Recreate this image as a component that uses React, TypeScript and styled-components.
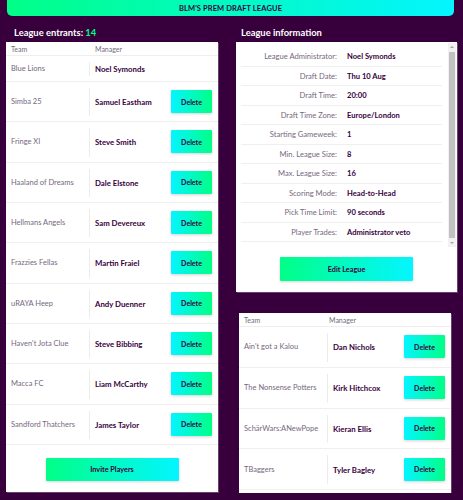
import styled, { createGlobalStyle } from "styled-components";

const GlobalStyle = createGlobalStyle`
  body {
    margin: 0;
    background: #37003c;
    font-family: Lato, "Noto Sans", Arial, sans-serif;
  }
`;

const green = "#00ff87";
const cyan = "#04f5ff";
const purple = "#37003c";

const Banner = styled.div`
  margin: 0 9px 0 7px;
  height: 16px;
  border-radius: 0 0 5px 5px;
  background: linear-gradient(to right, ${green}, ${cyan});
  display: flex;
  align-items: center;
  justify-content: center;
  color: ${purple};
  font-size: 7.5px;
  font-weight: 700;
  letter-spacing: 0.1px;
`;

const Columns = styled.div`
  display: grid;
  grid-template-columns: 212px 221px;
  column-gap: 18px;
  padding: 0 6px;
`;

const Column = styled.div`
  display: flex;
  flex-direction: column;
`;

const Title = styled.h2<{ $inset: number }>`
  margin: 10px 0 2px;
  padding-left: ${(p) => p.$inset}px;
  height: 14px;
  line-height: 14px;
  color: #fff;
  font-size: 9.4px;
  font-weight: 700;
  span {
    color: ${green};
  }
`;

const Panel = styled.div<{ $mt?: number; $ml?: number; $mr?: number }>`
  background: #fff;
  margin: ${(p) => p.$mt ?? 0}px ${(p) => p.$mr ?? 0}px 0 ${(p) => p.$ml ?? 0}px;
  box-shadow: 1px 1px 0 rgba(255, 255, 255, 0.25);
  display: flex;
  flex-direction: column;
`;

const HeadRow = styled.div<{ $team: number }>`
  display: grid;
  grid-template-columns: ${(p) => p.$team}px 1fr;
  height: 14px;
  align-items: center;
  border-bottom: 1px solid #eeeeee;
  padding-left: 5px;
  font-size: 7px;
  color: #756d7d;
  box-sizing: border-box;
  div + div {
    padding-left: 6px;
  }
`;

const Row = styled.div<{ $h: number; $team: number }>`
  display: grid;
  grid-template-columns: ${(p) => p.$team}px 1fr auto;
  height: ${(p) => p.$h}px;
  align-items: center;
  border-bottom: 1px solid #efefef;
  padding: 0 6px 0 5px;
  box-sizing: border-box;
`;

const TeamCell = styled.div`
  font-size: 7.5px;
  color: #76687e;
  white-space: nowrap;
`;

const ManagerCell = styled.div`
  align-self: stretch;
  margin: 6px 0 5px;
  border-left: 1px solid #ececec;
  padding-left: 5px;
  display: flex;
  align-items: center;
  font-size: 7.8px;
  font-weight: 700;
  color: ${purple};
  white-space: nowrap;
`;

const DeleteButton = styled.button`
  width: 41px;
  height: 23px;
  border: 0;
  border-radius: 1px;
  padding: 0;
  background: linear-gradient(to right, ${cyan}, ${green});
  box-shadow: 0 1px 3px rgba(0, 0, 0, 0.18);
  color: ${purple};
  font-family: inherit;
  font-size: 7px;
  font-weight: 700;
`;

const Footer = styled.div<{ $h: number; $pt: number }>`
  height: ${(p) => p.$h}px;
  padding-top: ${(p) => p.$pt}px;
  box-sizing: border-box;
  display: flex;
  justify-content: center;
`;

const WideButton = styled.button<{ $h: number }>`
  width: 133px;
  height: ${(p) => p.$h}px;
  border: 0;
  border-radius: 1px;
  background: linear-gradient(to right, ${green}, ${cyan});
  box-shadow: 0 1px 3px rgba(0, 0, 0, 0.15);
  color: ${purple};
  font-family: inherit;
  font-size: 7.3px;
  font-weight: 700;
`;

const InfoArea = styled.div`
  margin-top: 1px;
  height: 204px;
  display: flex;
`;

const InfoList = styled.div`
  flex: 1;
  overflow: hidden;
  padding: 4px 6px 0 5px;
`;

const ScrollTrack = styled.div`
  width: 8px;
  margin-right: 1px;
  background: #f1f1f1;
  display: flex;
  flex-direction: column;
  align-items: center;
`;

const ScrollArrow = styled.div<{ $down?: boolean }>`
  height: 8px;
  width: 8px;
  display: flex;
  align-items: center;
  justify-content: center;
  &::before {
    content: "";
    border-left: 2px solid transparent;
    border-right: 2px solid transparent;
    ${(p) => (p.$down ? "border-top" : "border-bottom")}: 2px solid #a3a3a3;
  }
`;

const ScrollThumb = styled.div`
  flex: 1;
  width: 6px;
  margin: 1px 0;
  background: #c1c1c1;
`;

const InfoRow = styled.div`
  display: grid;
  grid-template-columns: 96px 1fr;
  column-gap: 10px;
  height: 19.5px;
  align-items: center;
  border-bottom: 1px solid #efefef;
  box-sizing: border-box;
  font-size: 7.6px;
`;

const InfoLabel = styled.div`
  text-align: right;
  color: #76687e;
  white-space: nowrap;
`;

const InfoValue = styled.div`
  font-weight: 700;
  color: ${purple};
  white-space: nowrap;
`;

const entrants = [
  ["Simba 25", "Samuel Eastham"],
  ["Fringe XI", "Steve Smith"],
  ["Haaland of Dreams", "Dale Elstone"],
  ["Hellmans Angels", "Sam Devereux"],
  ["Frazzies Fellas", "Martin Fraiel"],
  ["uRAYA Heep", "Andy Duenner"],
  ["Haven't Jota Clue", "Steve Bibbing"],
  ["Macca FC", "Liam McCarthy"],
  ["Sandford Thatchers", "James Taylor"],
];

const pending = [
  ["Ain't got a Kalou", "Dan Nichols"],
  ["The Nonsense Potters", "Kirk Hitchcox"],
  ["SchärWars:ANewPope", "Kieran Ellis"],
  ["TBaggers", "Tyler Bagley"],
];

const info = [
  ["League Administrator:", "Noel Symonds"],
  ["Draft Date:", "Thu 10 Aug"],
  ["Draft Time:", "20:00"],
  ["Draft Time Zone:", "Europe/London"],
  ["Starting Gameweek:", "1"],
  ["Min. League Size:", "8"],
  ["Max. League Size:", "16"],
  ["Scoring Mode:", "Head-to-Head"],
  ["Pick Time Limit:", "90 seconds"],
  ["Player Trades:", "Administrator veto"],
];

export default function App() {
  return (
    <>
      <GlobalStyle />
      <Banner>BLM'S PREM DRAFT LEAGUE</Banner>
      <Columns>
        <Column>
          <Title $inset={8}>
            League entrants: <span>14</span>
          </Title>
          <Panel>
            <HeadRow $team={78}>
              <div>Team</div>
              <div>Manager</div>
            </HeadRow>
            <Row $h={26} $team={78}>
              <TeamCell>Blue Lions</TeamCell>
              <ManagerCell>Noel Symonds</ManagerCell>
            </Row>
            {entrants.map(([team, manager]) => (
              <Row key={team} $h={40.33} $team={78}>
                <TeamCell>{team}</TeamCell>
                <ManagerCell>{manager}</ManagerCell>
                <DeleteButton>Delete</DeleteButton>
              </Row>
            ))}
            <Footer $h={47} $pt={13}>
              <WideButton $h={23}>Invite Players</WideButton>
            </Footer>
          </Panel>
        </Column>
        <Column>
          <Title $inset={5}>League information</Title>
          <Panel>
            <InfoArea>
              <InfoList>
                {info.map(([label, value]) => (
                  <InfoRow key={label}>
                    <InfoLabel>{label}</InfoLabel>
                    <InfoValue>{value}</InfoValue>
                  </InfoRow>
                ))}
              </InfoList>
              <ScrollTrack>
                <ScrollArrow />
                <ScrollThumb />
                <ScrollArrow $down />
              </ScrollTrack>
            </InfoArea>
            <Footer $h={45} $pt={10}>
              <WideButton $h={24}>Edit League</WideButton>
            </Footer>
          </Panel>
          <Panel $mt={21} $ml={3} $mr={6}>
            <HeadRow $team={79}>
              <div>Team</div>
              <div>Manager</div>
            </HeadRow>
            {pending.map(([team, manager]) => (
              <Row key={team} $h={40.75} $team={83}>
                <TeamCell>{team}</TeamCell>
                <ManagerCell>{manager}</ManagerCell>
                <DeleteButton>Delete</DeleteButton>
              </Row>
            ))}
            <Footer $h={3} $pt={0} />
          </Panel>
        </Column>
      </Columns>
    </>
  );
}
